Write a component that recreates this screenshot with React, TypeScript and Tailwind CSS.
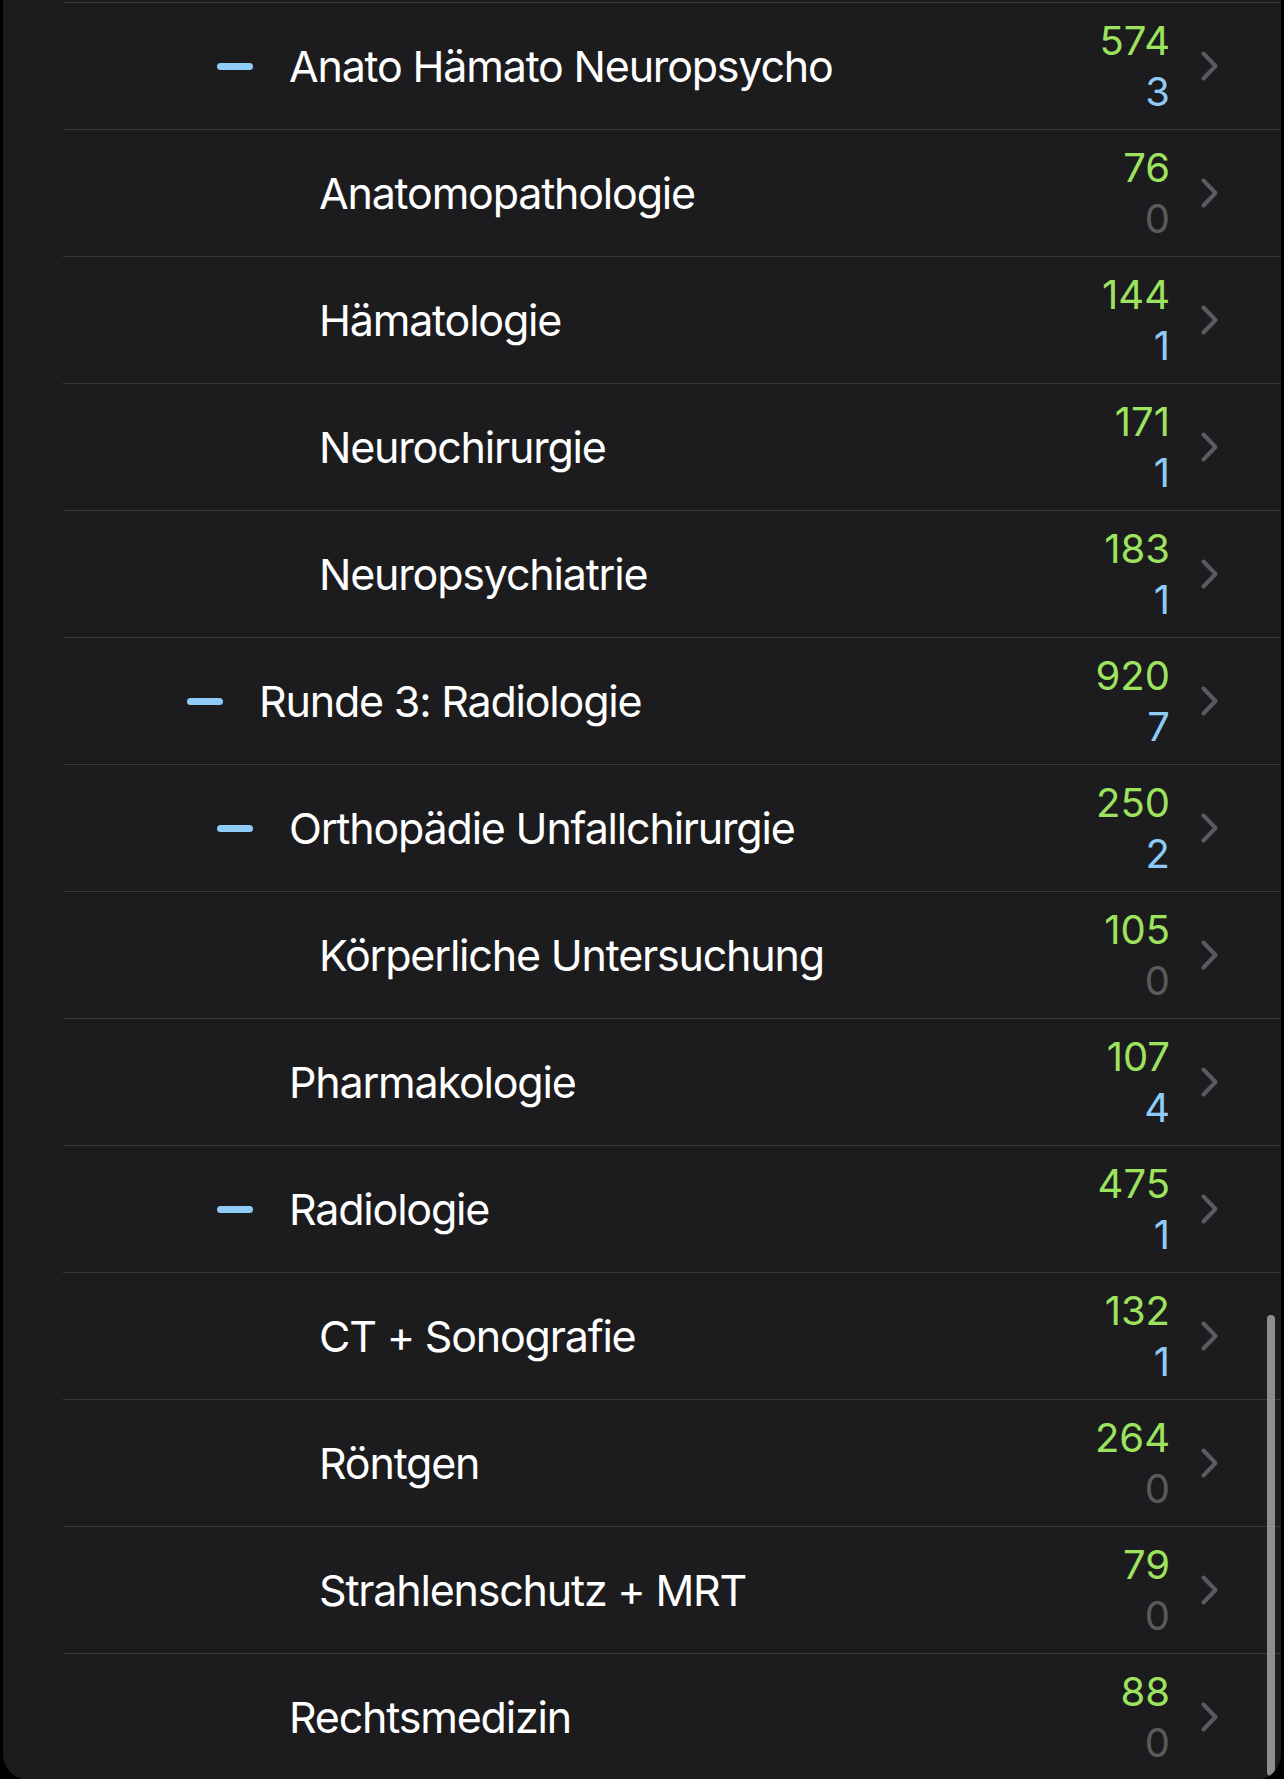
import React from "react";

type Row = { level: 1 | 2 | 3; dash?: boolean; label: string; total: number; due: number };

const rows: Row[] = [
  { level: 2, dash: true, label: "Anato Hämato Neuropsycho", total: 574, due: 3 },
  { level: 3, label: "Anatomopathologie", total: 76, due: 0 },
  { level: 3, label: "Hämatologie", total: 144, due: 1 },
  { level: 3, label: "Neurochirurgie", total: 171, due: 1 },
  { level: 3, label: "Neuropsychiatrie", total: 183, due: 1 },
  { level: 1, dash: true, label: "Runde 3: Radiologie", total: 920, due: 7 },
  { level: 2, dash: true, label: "Orthopädie Unfallchirurgie", total: 250, due: 2 },
  { level: 3, label: "Körperliche Untersuchung", total: 105, due: 0 },
  { level: 2, label: "Pharmakologie", total: 107, due: 4 },
  { level: 2, dash: true, label: "Radiologie", total: 475, due: 1 },
  { level: 3, label: "CT + Sonografie", total: 132, due: 1 },
  { level: 3, label: "Röntgen", total: 264, due: 0 },
  { level: 3, label: "Strahlenschutz + MRT", total: 79, due: 0 },
  { level: 2, label: "Rechtsmedizin", total: 88, due: 0 },
];

const indent: Record<number, string> = {
  1: "pl-[184px]",
  2: "pl-[214px]",
  3: "pl-[244px]",
};

function Chevron() {
  return (
    <svg width="17" height="30" viewBox="0 0 17 30" className="shrink-0">
      <polyline
        points="2.5,2.5 14.5,15 2.5,27.5"
        fill="none"
        stroke="#5b5b5f"
        strokeWidth="4"
        strokeLinecap="round"
        strokeLinejoin="round"
      />
    </svg>
  );
}

function ListRow({ row }: { row: Row }) {
  return (
    <div className="flex flex-col">
      <div className="ml-[60px] h-px bg-[#3a3a3c]" />
      <div className="flex h-[126px] items-center">
        <div className={`flex flex-1 items-center ${indent[row.level]}`}>
          <div className="flex w-[72px] shrink-0 items-center">
            {row.dash && <div className="h-[7px] w-[36px] rounded-full bg-[#8ecbf6]" />}
          </div>
          <span className="text-[43px] leading-[52px] tracking-[-1.2px] text-white">{row.label}</span>
        </div>
        <div className="flex flex-col items-end text-[40px] leading-[51px]">
          <span className="text-[#9ee35e]">{row.total}</span>
          <span className={row.due > 0 ? "text-[#8ecbf6]" : "text-[#5a5a5c]"}>{row.due}</span>
        </div>
        <div className="ml-[31px] mr-[63px] flex items-center">
          <Chevron />
        </div>
      </div>
    </div>
  );
}

export default function App() {
  return (
    <div className="min-h-[1779px] w-full bg-black font-['Inter','Noto_Sans',sans-serif]">
      <div className="relative mx-[3px] overflow-hidden rounded-b-[26px] bg-[#1c1c1e] pt-[2px]">
        {rows.map((r, i) => (
          <ListRow key={i} row={r} />
        ))}
        <div className="absolute right-[6px] top-[1315px] h-[461px] w-[8px] rounded-full bg-[#8e8e90]" />
      </div>
    </div>
  );
}
